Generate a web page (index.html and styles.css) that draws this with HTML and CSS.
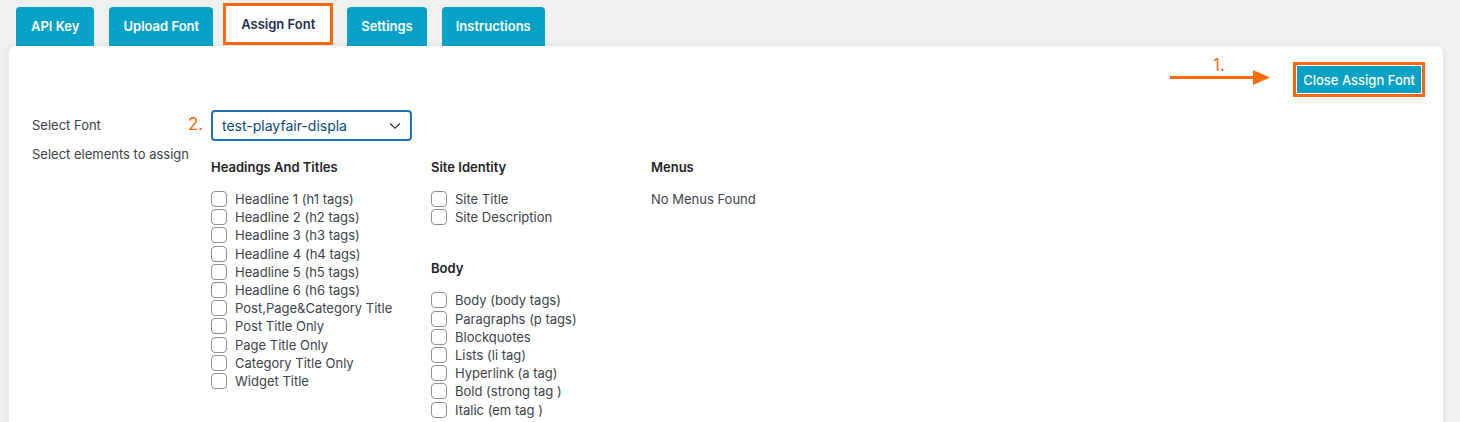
FILE: index.html
```html
<!DOCTYPE html>
<html lang="en">
<head>
    <meta charset="UTF-8">
    <meta name="viewport" content="width=device-width, initial-scale=1.0">
    <title>Assign Font</title>
    <link rel="stylesheet" href="styles.css">
</head>
<body>
    <div class="tabs">
        <a class="tab">API Key</a>
        <a class="tab">Upload Font</a>
        <a class="tab active">Assign Font</a>
        <a class="tab">Settings</a>
        <a class="tab">Instructions</a>
    </div>
    <div class="panel">
        <div class="top-row">
            <div class="hint hint-one">
                <span class="num">1.</span>
                <svg class="arrow" width="100" height="16" viewBox="0 0 100 16">
                    <path d="M0 7.5 H86" stroke="#fd6a0a" stroke-width="3" fill="none"/>
                    <path d="M83 0 L100 7.5 L83 15 Z" fill="#fd6a0a"/>
                </svg>
            </div>
            <div class="close-wrap">
                <button class="btn">Close Assign Font</button>
            </div>
        </div>
        <div class="form-row">
            <div class="label">Select Font</div>
            <div class="field">
                <span class="num num-two">2.</span>
                <div class="select">
                    <span>test-playfair-displa</span>
                    <svg width="12" height="8" viewBox="0 0 12 8">
                        <path d="M1 1.5 L6 6.2 L11 1.5" stroke="#2c3338" stroke-width="1.2" fill="none"/>
                    </svg>
                </div>
            </div>
        </div>
        <div class="form-row">
            <div class="label label-el">Select elements to assign</div>
            <div class="columns">
                <div class="col">
                    <h4>Headings And Titles</h4>
                    <label class="check"><span class="box"></span>Headline 1 (h1 tags)</label>
                    <label class="check"><span class="box"></span>Headline 2 (h2 tags)</label>
                    <label class="check"><span class="box"></span>Headline 3 (h3 tags)</label>
                    <label class="check"><span class="box"></span>Headline 4 (h4 tags)</label>
                    <label class="check"><span class="box"></span>Headline 5 (h5 tags)</label>
                    <label class="check"><span class="box"></span>Headline 6 (h6 tags)</label>
                    <label class="check"><span class="box"></span>Post,Page&amp;Category Title</label>
                    <label class="check"><span class="box"></span>Post Title Only</label>
                    <label class="check"><span class="box"></span>Page Title Only</label>
                    <label class="check"><span class="box"></span>Category Title Only</label>
                    <label class="check"><span class="box"></span>Widget Title</label>
                </div>
                <div class="col">
                    <h4>Site Identity</h4>
                    <label class="check"><span class="box"></span>Site Title</label>
                    <label class="check"><span class="box"></span>Site Description</label>
                    <h4 class="group">Body</h4>
                    <label class="check"><span class="box"></span>Body (body tags)</label>
                    <label class="check"><span class="box"></span>Paragraphs (p tags)</label>
                    <label class="check"><span class="box"></span>Blockquotes</label>
                    <label class="check"><span class="box"></span>Lists (li tag)</label>
                    <label class="check"><span class="box"></span>Hyperlink (a tag)</label>
                    <label class="check"><span class="box"></span>Bold (strong tag )</label>
                    <label class="check"><span class="box"></span>Italic (em tag )</label>
                </div>
                <div class="col">
                    <h4>Menus</h4>
                    <p class="none">No Menus Found</p>
                </div>
            </div>
        </div>
    </div>
</body>
</html>
```

FILE: styles.css
```css
*{
    margin: 0;
    padding: 0;
    box-sizing: border-box;
}
body{
    background-color: #f0f0f1;
    font-family: Inter, "Liberation Sans", Arial, sans-serif;
    font-size: 13px;
    color: #3c434a;
    line-height: 1.4;
    overflow: hidden;
}
.tabs{
    display: flex;
    gap: 15px;
    padding: 7px 0 0 16px;
    height: 46px;
}
.tab{
    display: flex;
    align-items: center;
    height: 39px;
    padding: 0 14px;
    background-color: #05a1c7;
    color: #fff;
    font-weight: 600;
    border-radius: 4px 4px 0 0;
}
.tab:first-child{
    padding: 0 15px;
}
.tab.active{
    background-color: #fff;
    color: #1d2f4f;
    height: 42px;
    margin-top: -4px;
    padding: 0 15px;
    border: 3px solid #fd6a0a;
    border-radius: 0;
    margin-left: -5px;
    margin-right: -1px;
}
.panel{
    margin-left: 9px;
    width: 1434px;
    height: 400px;
    background-color: #fff;
    border-radius: 7px 7px 0 0;
    box-shadow: 0 0 6px rgba(0,0,0,0.07);
    padding: 16px 18px 0 23px;
}
.top-row{
    display: flex;
    justify-content: flex-end;
    align-items: center;
    position: relative;
    height: 35px;
}
.close-wrap{
    border: 3px solid #fd6a0a;
    padding: 1px;
}
.btn{
    display: block;
    border: 0;
    background-color: #05a1c7;
    color: #fff;
    font-family: inherit;
    font-size: 13px;
    font-weight: 500;
    height: 27px;
    padding: 0 6px;
}
.hint{
    position: absolute;
}
.hint-one{
    right: 155px;
    top: 8px;
    width: 100px;
    height: 16px;
}
.num{
    color: #fd6a0a;
    font-size: 17px;
    line-height: 1;
}
.hint-one .num{
    position: absolute;
    left: 43px;
    top: -13px;
}
.arrow{
    display: block;
}
.form-row{
    display: flex;
}
.form-row:nth-child(2){
    margin-top: 13px;
    align-items: center;
}
.label{
    width: 179px;
}
.label-el{
    padding-top: 4px;
}
.field{
    position: relative;
}
.num-two{
    position: absolute;
    left: -23px;
    top: 6px;
}
.select{
    width: 201px;
    height: 31px;
    border: 2px solid #2271b1;
    border-radius: 4px;
    display: flex;
    align-items: center;
    justify-content: space-between;
    padding: 0 9px 0 9px;
    color: #0a4b78;
    font-size: 14px;
}
.columns{
    display: flex;
    padding-top: 17px;
}
.col{
    width: 220px;
}
h4{
    font-size: 13px;
    font-weight: 600;
    color: #1d2327;
    line-height: 18px;
    margin-bottom: 14px;
}
h4.group{
    margin-top: 33px;
}
.check{
    display: flex;
    align-items: center;
    height: 18.2px;
}
.box{
    width: 16px;
    height: 16px;
    border: 1px solid #8c8f94;
    border-radius: 4px;
    margin-right: 8px;
    background-color: #fff;
}
.none{
    line-height: 18px;
}
```
